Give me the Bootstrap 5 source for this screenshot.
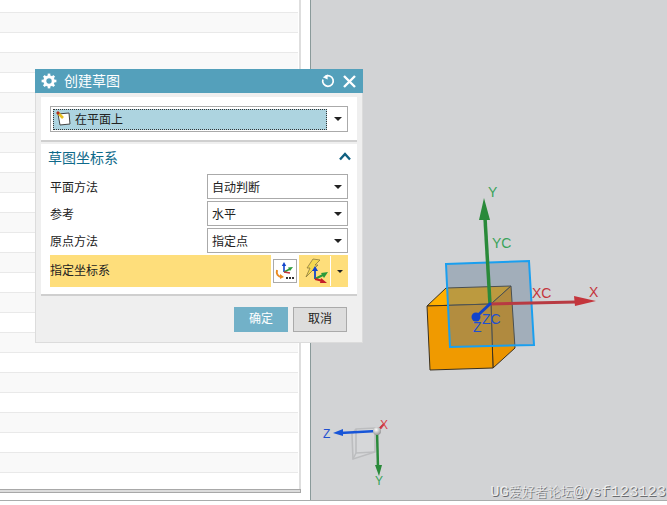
<!DOCTYPE html>
<html lang="zh">
<head>
    <meta charset="UTF-8">
    <title>创建草图</title>
    <link href="https://cdn.jsdelivr.net/npm/bootstrap@5.3.2/dist/css/bootstrap.min.css" rel="stylesheet">
    <style>
        html, body { margin: 0; height: 505px; overflow: hidden; background: #fff; }
        body { font: 12px "Liberation Sans", "Noto Sans CJK SC", sans-serif; color: #222; }

        /* overall page */
        .cad-screen { width: 667px; height: 500px; border-bottom: 1px solid #a9acac; box-sizing: content-box; }
        .tree-pane { width: 310px; background: #fff; }
        .tree-box { width: 301px; height: 493px; border-right: 2px solid #dedede; }
        .tree-row { height: 20px; border-bottom: 1px solid #e9e9e9; flex: none; margin-right: 1px; }
        .tree-row.first { height: 13px; }
        .tree-row.alt { background: #f9f9f9; }
        .tree-gap { flex: 1; }
        .tree-scroll { height: 4px; background: #dcdcdc; border: 1px solid #a8a8a8; border-left: 0; flex: none; margin-right: -2px; }
        .view-pane { flex: 1; background: #d2d3d5; border-left: 1px solid #8a9a9a; position: relative; }
        .view-pane svg { display: block; }
        .mark-text { position: absolute; right: 1px; bottom: 0; line-height: 15px; white-space: nowrap; color: #eceded;
            font-family: "Liberation Mono", monospace; font-size: 15.4px;
            text-shadow: 1px 1px 0 #6a6c6f; }
        .mark-text span { font-family: "Noto Sans CJK SC", sans-serif; font-size: 13px; font-weight: 300; }

        /* dialog */
        .sketch-dialog { position: absolute; left: 35px; top: 69px; width: 328px; height: 274px; background: #efefef; border: 1px solid #dcdcdc; border-top: 0; }
        .dlg-title { height: 24px; margin: 0 -1px; background: #54a0bb; color: #fff; font-size: 14px; padding: 0 7px 0 6px; }
        .dlg-title .dlg-name { margin-left: 7px; padding-bottom: 2px; }
        .dlg-block { margin: 0 5px; background: #fff; border-bottom: 2px solid #cfcfcf; }
        .type-block { margin-top: 4px; height: 45px; padding: 9px 9px 0; }
        .coord-block { margin-top: 2px; height: 152px; padding: 0 9px; }
        .fake-select { height: 25px; border: 1px solid #aaa; background: #fff; padding: 0 4px; }
        .fake-select .caret-mark { width: 0; height: 0; border-left: 4px solid transparent; border-right: 4px solid transparent; border-top: 4px solid #222; margin-left: auto; margin-right: 1px; }
        .type-select { height: 26px; padding: 2px 4px 2px 2px; }
        .type-pick { width: 274px; height: 21px; background: #add4e0; border: 1px dotted #333; padding: 0 0 2px 2px; gap: 4px; }
        .sect-head { height: 30px; color: #0f6a8a; font-size: 14px; padding-bottom: 5px; margin: 0 -3px 0 -2px; }
        .form-line { height: 25px; margin-bottom: 2px; }
        .form-line .line-label { width: 157px; padding-bottom: 1px; }
        .form-line .fake-select { width: 141px; }
        .pick-line { height: 32px; gap: 2px; }
        .pick-label { width: 221px; background: #fede7b; padding-bottom: 3px; }
        .pick-btn { width: 24px; height: 24px; border: 1px solid #aaa; background: #fff; }
        .pick-snap { width: 49px; background: #fede7b; height: 32px; }
        .pick-snap .snap-line { width: 1px; height: 30px; background: #fff; }
        .pick-snap .caret-mark { width: 0; height: 0; border-left: 3px solid transparent; border-right: 3px solid transparent; border-top: 3px solid #222; margin: 0 auto; }
        .dlg-foot { gap: 5px; padding: 11px 15px 0 0; }
        .btn.ok-btn, .btn.esc-btn { width: 54px; height: 25px; padding: 0; font-size: 12px; line-height: 23px; border-radius: 0; }
        .btn.ok-btn { background: #72b1c8; color: #fff; border: 1px solid #72b1c8; }
        .btn.esc-btn { background: #ddd; color: #222; border: 1px solid #aaa; }

        .ax { font: 14px "Liberation Sans", sans-serif; }
        .ax-small { font: 12px "Liberation Sans", sans-serif; }
    </style>
</head>
<body>
    <div class="cad-screen d-flex">
        <!-- left tree list, rows filled in by the script below -->
        <div class="tree-pane">
            <div class="tree-box d-flex flex-column" id="tree-box">
                <div class="tree-gap"></div>
                <div class="tree-scroll"></div>
            </div>
        </div>

        <!-- 3d view -->
        <div class="view-pane">
            <svg width="356" height="500" viewBox="311 0 356 500">
                <defs>
                    <radialGradient id="ball-shade" cx="0.4" cy="0.35" r="0.7">
                        <stop offset="0" stop-color="#ffffff"/>
                        <stop offset="1" stop-color="#8e8e8e"/>
                    </radialGradient>
                </defs>
                <!-- cube -->
                <polygon points="427,306 446,288 511,286 491,304" fill="#ffb000" stroke="#3a3020" stroke-width="1"/>
                <polygon points="491,304 511,286 515,348 493,368" fill="#eb9400" stroke="#3a3020" stroke-width="1"/>
                <polygon points="427,306 491,304 493,368 430,370" fill="#f09a00" stroke="#3a3020" stroke-width="1"/>
                <!-- sketch plane -->
                <polygon points="446,264 529,261 534,345 450,347" fill="#5f7d95" fill-opacity="0.42" stroke="#1a9fef" stroke-width="2"/>
                <!-- axes -->
                <line x1="490" y1="304" x2="485" y2="218" stroke="#2a8a3a" stroke-width="3.5"/>
                <polygon points="484,198 479,220 490,220" fill="#2a8a3a"/>
                <line x1="490" y1="304" x2="576" y2="302" stroke="#b83a42" stroke-width="3"/>
                <polygon points="596,301 574,296 575,306" fill="#c4353c"/>
                <line x1="491" y1="303" x2="476" y2="317" stroke="#1144cc" stroke-width="3"/>
                <circle cx="476" cy="317" r="4.5" fill="#1144cc"/>
                <text class="ax" x="488" y="197" fill="#3aa35a">Y</text>
                <text class="ax" x="492" y="248" fill="#3aa35a">YC</text>
                <text class="ax" x="532" y="298" fill="#c4353c">XC</text>
                <text class="ax" x="589" y="297" fill="#c4353c">X</text>
                <text class="ax" x="473" y="332" fill="#1f50d0">Z</text>
                <text class="ax" x="482" y="324" fill="#1f50d0">ZC</text>

                <!-- little corner triad -->
                <g fill="#d6d7d9" stroke="#bcbdbf" stroke-width="1.6">
                    <polygon points="352,434 356,429 375,428 375,452 353,459"/>
                    <polyline points="356,429 356,453 375,452" fill="none"/>
                    <line x1="356" y1="453" x2="353" y2="459"/>
                </g>
                <line x1="377" y1="431" x2="340" y2="433" stroke="#1755d8" stroke-width="2.5"/>
                <polygon points="333,433 343,429 343,436" fill="#1755d8"/>
                <line x1="377" y1="431" x2="378" y2="468" stroke="#2a8a3a" stroke-width="2.5"/>
                <polygon points="379,476 375,465 382,465" fill="#2a8a3a"/>
                <line x1="377" y1="431" x2="384" y2="424" stroke="#c4353c" stroke-width="2"/>
                <circle cx="377" cy="431" r="4" fill="url(#ball-shade)"/>
                <text class="ax-small" x="323" y="438" fill="#1f50d0">Z</text>
                <text class="ax-small" x="375" y="485" fill="#3aa35a">Y</text>
                <text class="ax-small" x="380" y="429" fill="#d8434b">X</text>
            </svg>
            <div class="mark-text">UG<span>爱好者论坛</span>@ysf123123</div>
        </div>
    </div>

    <!-- create sketch dialog -->
    <div class="sketch-dialog">
        <div class="dlg-title d-flex align-items-center">
            <svg width="16" height="16" viewBox="0 0 16 16">
                <circle cx="8" cy="8" r="4.2" fill="none" stroke="#fff" stroke-width="3"/>
                <g stroke="#fff" stroke-width="2.6">
                    <line x1="8" y1="0.6" x2="8" y2="3.5"/><line x1="8" y1="12.5" x2="8" y2="15.4"/>
                    <line x1="0.6" y1="8" x2="3.5" y2="8"/><line x1="12.5" y1="8" x2="15.4" y2="8"/>
                    <line x1="2.8" y1="2.8" x2="4.8" y2="4.8"/><line x1="11.2" y1="11.2" x2="13.2" y2="13.2"/>
                    <line x1="2.8" y1="13.2" x2="4.8" y2="11.2"/><line x1="11.2" y1="4.8" x2="13.2" y2="2.8"/>
                </g>
            </svg>
            <span class="dlg-name">创建草图</span>
            <svg class="ms-auto" width="14" height="14" viewBox="0 0 14 14">
                <path d="M4 2.6A5.3 5.3 0 1 1 1.9 5.4" fill="none" stroke="#fff" stroke-width="1.7"/>
                <polygon points="6.6,0.4 6.6,5.6 1.8,3.2" fill="#fff"/>
            </svg>
            <svg class="ms-2" width="13" height="13" viewBox="0 0 13 13">
                <path d="M1 1L12 12M12 1L1 12" stroke="#fff" stroke-width="2.4"/>
            </svg>
        </div>

        <div class="dlg-block type-block">
            <div class="fake-select type-select d-flex align-items-center">
                <div class="type-pick d-flex align-items-center">
                    <svg width="15" height="15" viewBox="0 0 15 15">
                        <polygon points="2,3 13,2 14,13 4,14" fill="#fff" stroke="#444" stroke-width="1"/>
                        <line x1="1.5" y1="1.5" x2="7" y2="7" stroke="#e8c020" stroke-width="2.6"/>
                        <line x1="1" y1="1" x2="3" y2="3" stroke="#b03020" stroke-width="2.6"/>
                    </svg>
                    <span>在平面上</span>
                </div>
                <div class="caret-mark"></div>
            </div>
        </div>

        <div class="dlg-block coord-block">
            <div class="sect-head d-flex align-items-center justify-content-between">
                <span>草图坐标系</span>
                <svg width="12" height="9" viewBox="0 0 12 9"><path d="M1 7.5L6 2L11 7.5" fill="none" stroke="#0f5f80" stroke-width="2.4"/></svg>
            </div>
            <div class="form-line d-flex align-items-center">
                <div class="line-label">平面方法</div>
                <div class="fake-select d-flex align-items-center"><span>自动判断</span><div class="caret-mark"></div></div>
            </div>
            <div class="form-line d-flex align-items-center">
                <div class="line-label">参考</div>
                <div class="fake-select d-flex align-items-center"><span>水平</span><div class="caret-mark"></div></div>
            </div>
            <div class="form-line d-flex align-items-center">
                <div class="line-label">原点方法</div>
                <div class="fake-select d-flex align-items-center"><span>指定点</span><div class="caret-mark"></div></div>
            </div>
            <div class="pick-line d-flex align-items-center">
                <div class="pick-label h-100 d-flex align-items-center">指定坐标系</div>
                <div class="pick-btn d-flex align-items-center justify-content-center">
                    <svg width="20" height="20" viewBox="0 0 20 20">
                        <line x1="9" y1="11" x2="9" y2="3" stroke="#1144cc" stroke-width="1.6"/>
                        <polygon points="9,1 6.8,5 11.2,5" fill="#1144cc"/>
                        <line x1="9" y1="11" x2="15" y2="8" stroke="#2a9a3a" stroke-width="1.6"/>
                        <polygon points="18,6 13,6.5 15,10" fill="#2a9a3a"/>
                        <line x1="9" y1="11" x2="15" y2="12" stroke="#c4353c" stroke-width="1.6"/>
                        <path d="M2 9C1 13 3 16 7 16" fill="none" stroke="#e88a20" stroke-width="2"/>
                        <polygon points="5,13 9,16 5,18" fill="#e88a20"/>
                        <rect x="11" y="16" width="2" height="2" fill="#333"/><rect x="14" y="16" width="2" height="2" fill="#333"/><rect x="17" y="16" width="2" height="2" fill="#333"/>
                    </svg>
                </div>
                <div class="pick-snap d-flex align-items-center">
                    <svg width="31" height="32" viewBox="0 0 31 32">
                        <path d="M14 4L21 5L16 10L19 10L7 22L11 13L8 13Z" fill="#f4d850" stroke="#8a7a40" stroke-width="0.8"/>
                        <line x1="16" y1="24" x2="16" y2="15" stroke="#1144cc" stroke-width="1.8"/>
                        <polygon points="16,11 13,16 19,16" fill="#1144cc"/>
                        <line x1="16" y1="24" x2="24" y2="20" stroke="#2a9a3a" stroke-width="2"/>
                        <polygon points="29,17 22,18 25,23" fill="#2a9a3a"/>
                        <line x1="16" y1="24" x2="24" y2="26" stroke="#c4202a" stroke-width="2"/>
                        <polygon points="28,28 22,23 21,28" fill="#c4202a"/>
                    </svg>
                    <div class="snap-line"></div>
                    <div class="caret-mark"></div>
                </div>
            </div>
        </div>

        <div class="dlg-foot d-flex justify-content-end">
            <button class="btn ok-btn" type="button">确定</button>
            <button class="btn esc-btn" type="button">取消</button>
        </div>
    </div>

    <script src="https://cdn.jsdelivr.net/npm/bootstrap@5.3.2/dist/js/bootstrap.bundle.min.js"></script>
    <script>
        // fill the tree list with its striped rows
        const treeBox = document.getElementById('tree-box');
        const firstChild = treeBox.firstElementChild;
        for (let i = 0; i < 24; i++) {
            const row = document.createElement('div');
            row.className = 'tree-row' + (i === 0 ? ' first' : '') + (i % 2 === 1 ? ' alt' : '');
            treeBox.insertBefore(row, firstChild);
        }
    </script>
</body>
</html>
